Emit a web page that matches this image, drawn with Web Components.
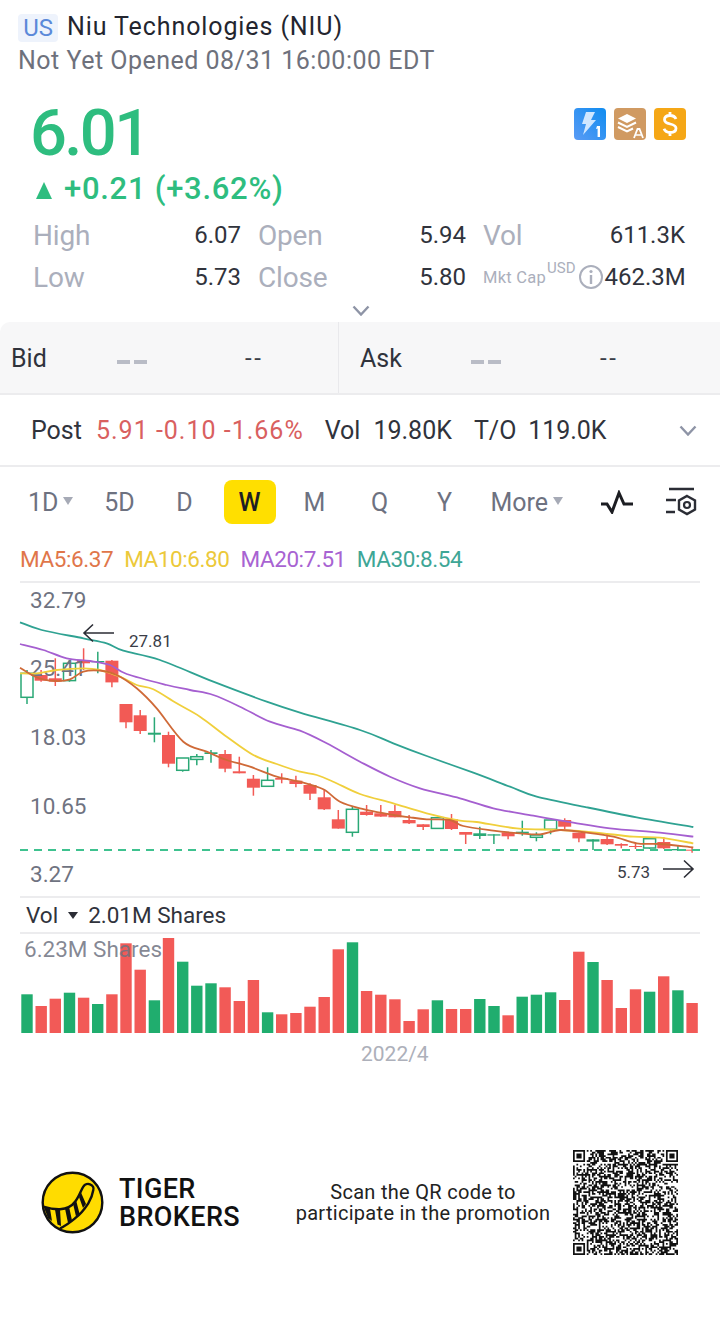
<!DOCTYPE html>
<html><head><meta charset="utf-8"><title>NIU</title>
<style>
html,body{margin:0;padding:0;background:#fff}
body{width:720px;height:1335px;overflow:hidden;font-family:Roboto,"Liberation Sans",sans-serif;color:#2b2e38}
</style></head><body>
<stock-header></stock-header>
<quote-block></quote-block>
<stat-grid></stat-grid>
<bid-ask></bid-ask>
<post-bar></post-bar>
<period-tabs></period-tabs>
<ma-legend></ma-legend>
<k-chart></k-chart>
<vol-chart></vol-chart>
<promo-footer></promo-footer>
<script>
function def(name,html){customElements.define(name,class extends HTMLElement{constructor(){super();this.attachShadow({mode:'open'}).innerHTML=typeof html==='function'?html():html;}});}
const chev=(c,w=18,h=11)=>`<svg width="${w}" height="${h}" viewBox="0 0 18 11"><path d="M1.5 1.5 9 9.5l7.5-8" fill="none" stroke="${c}" stroke-width="2.4"/></svg>`;

def('stock-header',`<style>
:host{display:block;height:78px;box-sizing:border-box;padding:14px 0 0 18px}
.r{display:flex;align-items:center;height:28px}
.b{width:40px;height:28px;background:#eef3fc;border-radius:4px;color:#5b89d9;font-size:24px;letter-spacing:-.2px;display:flex;align-items:center;justify-content:center}
.n{margin-left:9px;font-size:25px;letter-spacing:.9px;color:#23252f;position:relative;top:-2px;white-space:nowrap}
.s{margin-top:4px;font-size:25px;letter-spacing:.49px;color:#6e717c;line-height:30px;margin-left:0;white-space:nowrap}
</style><div class="r"><span class="b">US</span><span class="n">Niu Technologies (NIU)</span></div><div class="s">Not Yet Opened 08/31 16:00:00 EDT</div>`);

def('quote-block',`<style>
:host{display:flex;justify-content:space-between;height:135px;box-sizing:border-box;padding:22px 34px 0 30px}
.p{font-size:65px;line-height:66px;font-weight:500;color:#2ebd7f;letter-spacing:-2.6px}
.c{display:flex;align-items:center;margin-top:5px;font-size:31px;font-weight:500;color:#2ebd7f;line-height:36px;letter-spacing:.72px;padding-left:6px;white-space:nowrap}
.t{width:0;height:0;border-left:8.5px solid transparent;border-right:8.5px solid transparent;border-bottom:17px solid #2ebd7f;margin-right:12px;margin-top:2px}
.i{display:flex;gap:8px;padding-top:8px}
svg{display:block}
</style><div><div class="p">6.01</div><div class="c"><span class="t"></span>+0.21 (+3.62%)</div></div>
<div class="i">
<svg width="32" height="32" viewBox="0 0 32 32"><defs><linearGradient id="g1" x1="0" y1="1" x2="1" y2="0"><stop offset="0" stop-color="#5a9bf5"/><stop offset="1" stop-color="#0f8cf0"/></linearGradient></defs><rect width="32" height="32" rx="4" fill="url(#g1)"/><path d="M12 4h9l-4 8h5L9 27l3-11H8z" fill="#cfe6ff"/><path d="M23 18h3v11h-2.400v-8.500L22 21z" fill="#fff"/></svg>
<svg width="32" height="32" viewBox="0 0 32 32"><rect width="32" height="32" rx="4" fill="#d09a62"/><path d="M13 6l9 4.500-9 4.500-9-4.500z" fill="#fff"/><path d="M4 14.500l9 4.500 9-4.500M4 19l9 4.500 6-3" fill="none" stroke="#fff" stroke-width="2"/><path d="M20 30l3.500-9h2l3.500 9" fill="none" stroke="#fff" stroke-width="1.800"/><path d="M21.500 27h6" stroke="#fff" stroke-width="1.500"/></svg>
<svg width="32" height="32" viewBox="0 0 32 32"><rect width="32" height="32" rx="4" fill="#f5a716"/><path d="M22 11c-1-2.500-3.200-3.500-6-3.500-3.300 0-5.500 1.600-5.500 4.200 0 5.800 11.500 2.800 11.500 8.600 0 2.600-2.400 4.200-5.800 4.200-3 0-5.200-1.200-6.200-3.700M16 4v3.500M16 24.500V28" fill="none" stroke="#fff" stroke-width="2.800"/></svg>
</div>`);

def('stat-grid',`<style>
:host{display:grid;grid-template-columns:208px 208px 202px;column-gap:17px;height:109px;box-sizing:border-box;padding:1px 35px 0 33px;grid-auto-rows:42px;align-content:start}
.c{display:flex;justify-content:space-between;align-items:center;height:42px;font-size:24px;color:#30333c;white-space:nowrap}
.l{font-size:28px;color:#abafbc;letter-spacing:-.2px}
.m{display:flex;align-items:center;white-space:nowrap}
.mk{font-size:16.500px;color:#abafbc;letter-spacing:.25px}
.u{font-size:15px;color:#abafbc;position:relative;top:-9px;margin-left:1px}
svg{margin:0 1px 0 4px;display:block}
.ch{grid-column:1/-1;display:flex;justify-content:center;height:24px;align-items:center}
</style>
<div class="c"><span class="l">High</span><span>6.07</span></div>
<div class="c"><span class="l">Open</span><span>5.94</span></div>
<div class="c"><span class="l">Vol</span><span>611.3K</span></div>
<div class="c"><span class="l">Low</span><span>5.73</span></div>
<div class="c"><span class="l">Close</span><span>5.80</span></div>
<div class="c"><span class="m"><span class="mk">Mkt Cap</span><span class="u">USD</span><svg width="24" height="26" viewBox="0 0 24 26"><circle cx="12" cy="13" r="11" fill="none" stroke="#abafbc" stroke-width="2"/><path d="M12 11v9" stroke="#abafbc" stroke-width="2.400"/><circle cx="12" cy="7.500" r="1.600" fill="#abafbc"/></svg></span><span>462.3M</span></div>
<div class="ch">${chev('#8e94a6',18,11)}</div>`);

def('bid-ask',`<style>
:host{display:grid;grid-template-columns:338px 1fr;background:#f7f7f8;border-radius:10px 0 0 0;border-bottom:2px solid #ececee;box-sizing:border-box;font-size:25px;color:#30333c;height:73px}
.s{display:grid;align-items:center;height:71px;position:relative;padding-top:1px;box-sizing:border-box}
.a{grid-template-columns:106px 128px 1fr;padding-left:11px}
.b{grid-template-columns:111px 129px 1fr;padding-left:21px;border-left:1px solid #e9e9ec}
.d{display:flex;gap:4px;margin-top:8px}.d i{width:13px;height:4px;background:#b9bcc6;display:block}
.t{color:#3a3d47;font-size:24px;letter-spacing:2.5px}
</style>
<div class="s a"><span>Bid</span><span class="d"><i></i><i></i></span><span class="t">--</span></div>
<div class="s b"><span>Ask</span><span class="d"><i></i><i></i></span><span class="t">--</span></div>`);

def('post-bar',`<style>
:host{display:flex;align-items:center;height:72px;box-sizing:border-box;border-bottom:2px solid #ececee;padding:0 23px 0 31px;font-size:25px;color:#30333c;white-space:nowrap}
.r{color:#d9605f;margin-left:14px;letter-spacing:1px}
.v{margin-left:21px}.n{margin-left:13px}.to{margin-left:22px}.n2{margin-left:12px;letter-spacing:-.1px}
svg{margin-left:auto;display:block}
</style><span>Post</span><span class="r">5.91 -0.10 -1.66%</span><span class="v">Vol</span><span class="n">19.80K</span><span class="to">T/O</span><span class="n2">119.0K</span>${chev('#8e94a6',18,11)}`);

def('period-tabs',`<style>
:host{display:flex;align-items:center;height:70px;padding-left:22px;font-size:25px;color:#6d7180;box-sizing:border-box;position:relative}
.t{width:65px;height:44px;display:flex;align-items:center;justify-content:center;flex:none}
.w{width:52px;margin:0 6.500px;background:#ffdf00;border-radius:8px;color:#1e1f24;font-weight:500}
.first{justify-content:flex-start;padding-left:6px;box-sizing:border-box}
.tri{width:0;height:0;border-left:5.500px solid transparent;border-right:5.500px solid transparent;border-top:8px solid #a6aab6;margin-left:5px;margin-top:-3px}
.more{display:flex;align-items:center;margin-left:13.500px}
svg{display:block}.ic1{margin-left:37px}.ic2{margin-left:30px}
</style>
<div class="t first"><span>1D</span><span class="tri"></span></div><div class="t">5D</div><div class="t">D</div><div class="t w">W</div><div class="t">M</div><div class="t">Q</div><div class="t">Y</div>
<div class="more"><span>More</span><span class="tri"></span></div>
<svg class="ic1" width="35" height="24" viewBox="0 0 35 24"><path d="M1 14h6l5 8 7-19 5 11h9" fill="none" stroke="#1c1d22" stroke-width="3"/></svg>
<svg class="ic2" width="32" height="30" viewBox="0 0 32 30"><path d="M4 2h25M1 13h10M1 25h9" stroke="#2b2d35" stroke-width="2.600" fill="none"/><path d="M22 9l8 4.500v9L22 27l-8-4.500v-9z" fill="none" stroke="#2b2d35" stroke-width="2.400"/><circle cx="22" cy="18" r="3" fill="none" stroke="#2b2d35" stroke-width="2.200"/></svg>`);

def('ma-legend',`<style>
:host{display:flex;height:44px;align-items:center;padding-left:20px;box-sizing:border-box;font-size:22.500px;letter-spacing:-.42px;gap:11px;white-space:nowrap}
</style><span style="color:#e0764a">MA5:6.37</span><span style="color:#ecc93a">MA10:6.80</span><span style="color:#a863d2">MA20:7.51</span><span style="color:#3ea696">MA30:8.54</span>`);

const Z3=(p)=>p.map(([x,y])=>[x/3,580+y/3]);
const Z4=(p)=>p.map(([x,y])=>[360+x/3,700+y/3]);
function smooth(pts){let d=`M${pts[0][0].toFixed(1)} ${pts[0][1].toFixed(1)}`;for(let i=0;i<pts.length-1;i++){const p0=pts[i-1]||pts[i],p1=pts[i],p2=pts[i+1],p3=pts[i+2]||p2;d+=`C${(p1[0]+(p2[0]-p0[0])/6).toFixed(1)} ${(p1[1]+(p2[1]-p0[1])/6).toFixed(1)} ${(p2[0]-(p3[0]-p1[0])/6).toFixed(1)} ${(p2[1]-(p3[1]-p1[1])/6).toFixed(1)} ${p2[0].toFixed(1)} ${p2[1].toFixed(1)}`;}return d;}
function candles(){
 const a=[['h',270,280,352,372],['r',270,285,302,305],['r',235,295,305,318],['h',240,250,302,305],['r',205,240,250,270],['g',215,243,247,280],['r',240,242,307,322],['r',372,372,427,445],['r',390,406,453,462],['g',412,458,464,487],['r',455,465,551,562],['h',534,534,571,575],['h',522,530,538,556],['g',510,517,522,548],['r',510,522,566,577],['r',530,574,580,580],['r',585,596,623,647],['h',562,601,619,620],['r',580,594,599,610],['r',587,602,612,622],['r',610,615,641,660],['r',630,652,688,690],['r',690,718,746,746],['h',680,688,757,770]];
 const b=[['r',315,335,345,347],['r',315,340,350,350],['r',315,333,352,352],['r',345,360,370,372],['r',373,373,381,390],['h',353,353,385,387],['r',342,358,387,390],['r',396,396,404,432],['g',380,400,408,417],['g',403,403,407,432],['r',397,397,409,418],['g',362,395,401,407],['h',397,405,412,424],['h',360,360,388,403],['r',355,360,380,388],['r',398,398,415,427],['g',418,418,425,450],['r',400,417,433,435],['r',430,432,437,445],['r',427,438,441,447],['h',416,416,444,446],['r',412,426,445,447],['g',435,447,451,453],['r',442,449,452,458]];
 let s='';const R='#f25a55',G='#2aa876';
 const one=(c,i,ox)=>{const x=27+14.15*i,[k,wt,bt,bb,wb]=c;const Y=v=>ox+v/3;const col=k==='r'?R:G;
  s+=`<path d="M${x.toFixed(1)} ${Y(wt).toFixed(1)}V${Y(k==='h'?bt:wb).toFixed(1)}" stroke="${col}" stroke-width="1.500"/>`;
  if(k==='h'){s+=`<path d="M${x.toFixed(1)} ${Y(bb).toFixed(1)}V${Y(wb).toFixed(1)}" stroke="${col}" stroke-width="1.500"/><rect x="${(x-6).toFixed(1)}" y="${Y(bt).toFixed(1)}" width="12" height="${((bb-bt)/3).toFixed(1)}" fill="none" stroke="${col}" stroke-width="1.500"/>`;}
  else s+=`<rect x="${(x-6.500).toFixed(1)}" y="${Y(bt).toFixed(1)}" width="13" height="${((bb-bt)/3).toFixed(1)}" fill="${col}"/>`;};
 a.forEach((c,i)=>one(c,i,580));b.forEach((c,i)=>one(c,i+24,700));return s;}
const teal=[...Z3([[60,127],[125,150],[250,175],[320,190],[370,212],[480,240],[640,305],[800,365],[900,398],[1080,450]]),...Z4([[100,130],[200,168],[340,218],[450,260],[530,290],[680,322],[830,352],[1000,381]])];
const purple=[...Z3([[60,192],[130,210],[200,235],[270,243],[330,255],[380,282],[500,315],[570,330],[640,345],[720,380],[810,425],[900,452],[980,490],[1080,545]]),...Z4([[90,230],[180,265],[300,295],[400,325],[520,347],[640,368],[750,385],[900,398],[1000,410]])];
const yellow=[...Z3([[60,280],[110,280],[170,270],[250,265],[300,270],[360,290],[410,315],[460,328],[530,370],[600,410],[680,470],[760,525],[830,552],[900,575],[950,585],[1000,605],[1080,642]]),...Z4([[100,310],[200,340],[300,362],[350,366],[470,385],[600,390],[700,397],[820,410],[900,413],[1000,430]])];
const orange=[...Z3([[60,263],[110,292],[165,303],[210,298],[250,275],[300,272],[350,285],[410,325],[470,385],[550,485],[620,515],[680,540],[750,560],[830,590],[900,605],[970,628],[1020,665],[1080,685]]),...Z4([[100,345],[150,352],[200,358],[270,360],[310,378],[400,392],[480,400],[540,403],[600,390],[680,398],[760,410],[830,430],[900,432],[1000,442]])];

def('k-chart',()=>`<style>:host{display:block;height:315px}svg{display:block;font-family:Roboto,sans-serif}</style>
<svg width="720" height="315" viewBox="0 581 720 315">
<path d="M20 582H700" stroke="#ececee" stroke-width="2"/>
${candles()}
<g font-size="22.500" fill="#6f7381">
<text x="30" y="608">32.79</text><text x="30" y="676">25.41</text><text x="30" y="745">18.03</text><text x="30" y="814">10.65</text><text x="30" y="882">3.27</text></g>
<g fill="none" stroke-width="1.800">
<path d="${smooth(teal)}" stroke="#2fa292"/><path d="${smooth(purple)}" stroke="#a55fd0"/><path d="${smooth(yellow)}" stroke="#f0cf3c"/><path d="${smooth(orange)}" stroke="#cf6a38"/></g>
<path d="M20 850H700" stroke="#3ec28f" stroke-width="2" stroke-dasharray="8 6"/>
<g fill="none" stroke="#2b2d35" stroke-width="1.600"><path d="M114 633H84M93 624.500 84 633l9 8.500"/><path d="M663 869H693M684 860.500 693 869l-9 8.500"/></g>
<g font-size="17" fill="#3a3d47"><text x="129" y="647">27.81</text><text x="617" y="878">5.73</text></g>
</svg>`);

const V=[[298,'g'],[333,'r'],[311,'r'],[293,'g'],[308,'r'],[327,'g'],[298,'r'],[145,'r'],[224,'r'],[316,'g'],[129,'r'],[200,'g'],[272,'g'],[265,'g'],[277,'r'],[318,'r'],[255,'r'],[352,'g'],[358,'r'],[354,'r'],[335,'r'],[306,'r'],[163,'r'],[142,'g'],[288,'r'],[299,'r'],[313,'r'],[378,'r'],[343,'r'],[316,'g'],[342,'r'],[342,'r'],[312,'g'],[333,'g'],[361,'r'],[305,'g'],[299,'g'],[292,'g'],[315,'r'],[170,'r'],[201,'g'],[255,'r'],[339,'r'],[283,'r'],[290,'g'],[244,'r'],[286,'g'],[324,'r']];
def('vol-chart',()=>`<style>:host{display:block;height:172px}
.h{display:flex;align-items:center;font-size:22.500px;color:#30333c;border-top:2px solid #ececee;border-bottom:2px solid #ececee;margin:0 20px;padding-left:6px;box-sizing:border-box;height:38px}
.tri{width:0;height:0;border-left:5.500px solid transparent;border-right:5.500px solid transparent;border-top:7px solid #2b2d35;margin:0 10px 0 10px}
svg{display:block;font-family:Roboto,sans-serif}</style>
<div class="h"><span>Vol</span><span class="tri"></span><span>2.01M Shares</span></div>
<svg width="720" height="134" viewBox="0 934 720 134">
${V.map(([t,k],i)=>{const y=895+t/3;return `<rect x="${(21.300+14.150*i).toFixed(1)}" y="${y.toFixed(1)}" width="11.400" height="${(1033-y).toFixed(1)}" fill="${k==='r'?'#f25a57':'#20ad6e'}"/>`}).join('')}
<text x="24" y="957" font-size="22.500" fill="#6f7381" fill-opacity=".85">6.23M Shares</text>
<text x="361" y="1061" font-size="21" fill="#adb0ba">2022/4</text>
</svg>`);

function qr(){
 const n=61;let seed=20220831;const rnd=()=>(seed=(seed*1664525+1013904223)>>>0)/4294967296;
 const g=[...Array(n)].map(()=>[...Array(n)].map(()=>rnd()<.52));
 const finder=(ox,oy)=>{for(let y=-1;y<8;y++)for(let x=-1;x<8;x++){const X=ox+x,Y=oy+y;if(X<0||Y<0||X>=n||Y>=n)continue;const ring=x>=0&&x<7&&y>=0&&y<7&&(x===0||x===6||y===0||y===6);const core=x>=2&&x<=4&&y>=2&&y<=4;g[Y][X]=ring||core;}};
 finder(0,0);finder(n-7,0);finder(0,n-7);
 for(let y=-2;y<=2;y++)for(let x=-2;x<=2;x++){g[n-7+y][n-7+x]=Math.max(Math.abs(x),Math.abs(y))!==1;}
 let d='';g.forEach((r,y)=>r.forEach((v,x)=>{if(v)d+=`M${x} ${y}h1v1h-1z`;}));
 return `<svg width="105" height="105" viewBox="0 0 ${n} ${n}"><path d="${d}" fill="#111"/></svg>`;
}
def('promo-footer',()=>`<style>
:host{display:flex;align-items:center;height:105px;margin-top:82px;padding-left:41px;box-sizing:border-box;position:relative}
svg{display:block;flex:none}
.b{margin-left:15px;font-size:27px;font-weight:500;line-height:28px;color:#111;width:122px;letter-spacing:.4px;white-space:nowrap}
.c{width:332px;text-align:center;font-size:20px;line-height:21px;color:#222;letter-spacing:.3px;box-sizing:border-box;padding-left:32px;white-space:nowrap}
</style>
<svg width="63" height="63" viewBox="0 0 63 63"><circle cx="31.500" cy="31.500" r="29.800" fill="#ffdc00" stroke="#111" stroke-width="2.400"/>
<path d="M2.300 35.700C8 37.500 13 38.500 19 38.300 27 37.500 31 35 34 30.700 38 26 39.500 20 42.300 15.700 44 13 47 12.500 49 13.300 52 14.500 53 17 52.300 19 51.500 24 50 28 47.300 32.300 43 39 39 43.500 34 47.300 29 51.500 24 55 19 57.300" fill="none" stroke="#111" stroke-width="2.400" stroke-linejoin="round"/>
<path d="M3 36.500 9 37.500 11 50 7 47zM14 38.500 19 38.500 20 55 16.500 53.500zM24 37.500 28 35.500 31 49.500 27 52zM32 32.500 35 29 38.500 42.500 35 45.500zM38 26 40 21.500 45 33 42 37z" fill="#111"/></svg>
<div class="b">TIGER<br>BROKERS</div>
<div class="c">Scan the QR code to<br>participate in the promotion</div>
<div>${qr()}</div>`);
</script>
</body></html>
